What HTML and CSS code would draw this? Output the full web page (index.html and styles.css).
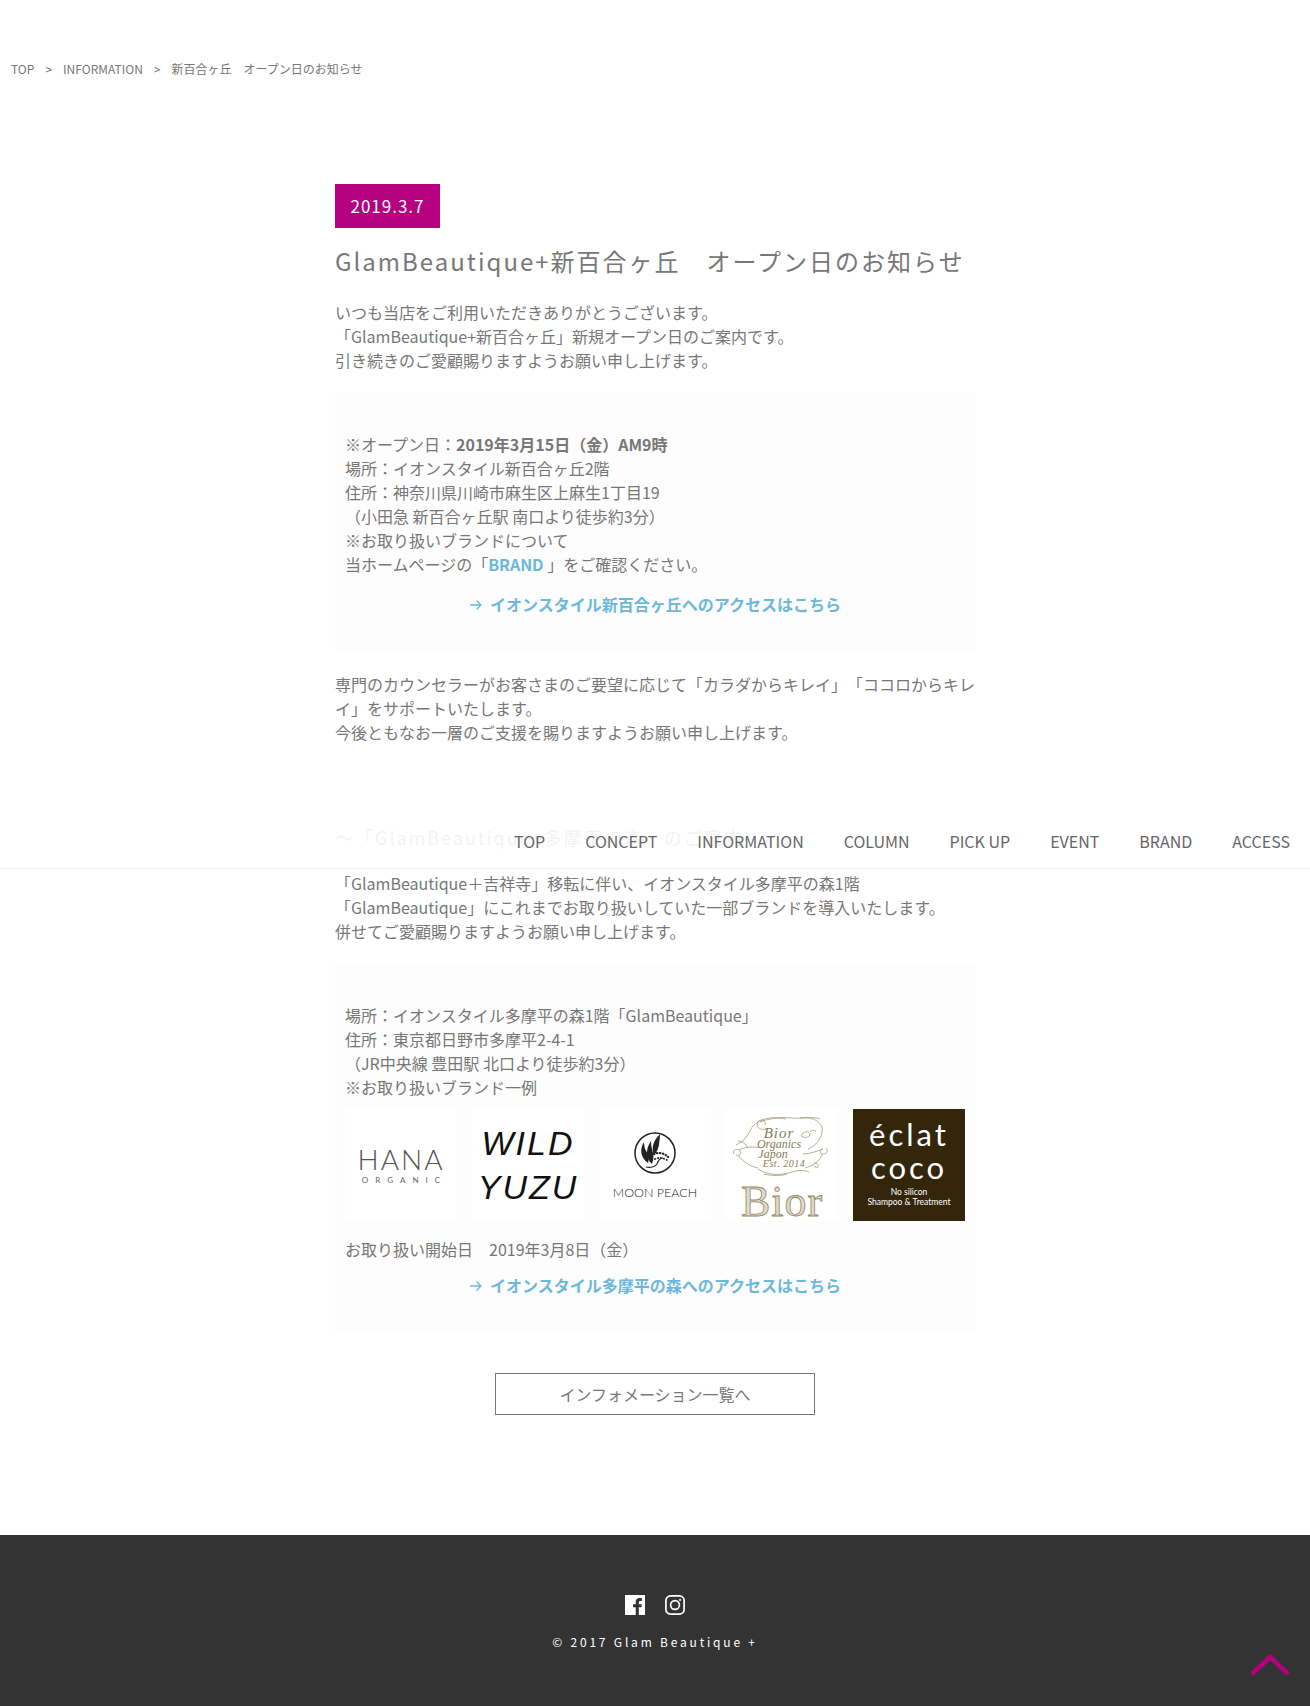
FILE: index.html
```html
<!DOCTYPE html>
<html lang="ja">
  <head>
    <meta charset="UTF-8" />
    <meta name="viewport" content="width=device-width, initial-scale=1.0" />
    <title>新百合ヶ丘 オープン日のお知らせ</title>
    <link rel="stylesheet" href="styles.css">
  </head>
  <body>
    <nav class="gnav">
      <a href="#">TOP</a>
      <a href="#">CONCEPT</a>
      <a href="#">INFORMATION</a>
      <a href="#">COLUMN</a>
      <a href="#">PICK UP</a>
      <a href="#">EVENT</a>
      <a href="#">BRAND</a>
      <a href="#">ACCESS</a>
    </nav>

    <div class="crumb">
      <a href="#">TOP</a><span>&gt;</span><a href="#">INFORMATION</a><span>&gt;</span><a href="#">新百合ヶ丘　オープン日のお知らせ</a>
    </div>

    <main class="article">
      <div class="date">2019.3.7</div>
      <h1 class="title">GlamBeautique+新百合ヶ丘　オープン日のお知らせ</h1>
      <p class="para">
        いつも当店をご利用いただきありがとうございます。<br />
        「GlamBeautique+新百合ヶ丘」新規オープン日のご案内です。<br />
        引き続きのご愛顧賜りますようお願い申し上げます。
      </p>

      <div class="infobox">
        ※オープン日：<b>2019年3月15日（金）AM9時</b><br />
        場所：イオンスタイル新百合ヶ丘2階<br />
        住所：神奈川県川崎市麻生区上麻生1丁目19<br />
        （小田急 新百合ヶ丘駅 南口より徒歩約3分）<br />
        ※お取り扱いブランドについて<br />
        当ホームページの「<a class="brandlink" href="#">BRAND</a> 」をご確認ください。
        <a class="access first" href="#">
          <svg class="arrow" viewBox="0 0 14 12"><path d="M1 6h11M7.5 1.5 12 6l-4.5 4.5" /></svg>イオンスタイル新百合ヶ丘へのアクセスはこちら
        </a>
      </div>

      <p class="para">
        専門のカウンセラーがお客さまのご要望に応じて「カラダからキレイ」「ココロからキレイ」をサポートいたします。<br />
        今後ともなお一層のご支援を賜りますようお願い申し上げます。
      </p>

      <h2 class="subtitle">〜「GlamBeautique+多摩平の森」のご案内</h2>
      <p class="para tight">
        「GlamBeautique＋吉祥寺」移転に伴い、イオンスタイル多摩平の森1階<br />
        「GlamBeautique」にこれまでお取り扱いしていた一部ブランドを導入いたします。<br />
        併せてご愛顧賜りますようお願い申し上げます。
      </p>

      <div class="infobox second">
        場所：イオンスタイル多摩平の森1階「GlamBeautique」<br />
        住所：東京都日野市多摩平2-4-1<br />
        （JR中央線 豊田駅 北口より徒歩約3分）<br />
        ※お取り扱いブランド一例
        <div class="logos">
          <div class="logo hana">
            <span class="hana-name">HANA</span>
            <span class="hana-sub">ORGANIC</span>
          </div>
          <div class="logo yuzu">
            <span>WILD</span>
            <span>YUZU</span>
          </div>
          <div class="logo moon">
            <svg class="moon-mark" viewBox="0 0 44 44">
              <circle cx="22" cy="22" r="20" fill="none" stroke="#222" stroke-width="1.5" />
              <path fill="#222" d="M15 32C8 27 6 19 11 11c0 6 2 9 4 12 1 3 1 6 0 9z" />
              <path fill="#222" d="M19 33c-6-6-7-14-1-23 0 5 1 8 2 12 1 4 0 8-1 11z" />
              <path fill="#222" d="M21 24c-3-7-1-14 6-21 0 5-1 8-1 11-1 4-2 7-5 10z" />
              <path fill="none" stroke="#222" stroke-width="1.2" d="M13 36c4 1 9 0 11-3 1-3 3-6 6-6" />
              <path fill="none" stroke="#222" stroke-width="2.2" stroke-linecap="round" stroke-dasharray=".4 2.6" d="M21 23c5-2 11-1 15 4" />
              <path fill="none" stroke="#222" stroke-width="1.8" stroke-linecap="round" stroke-dasharray=".4 2.6" d="M22 28c4-2 8-1 12 1" />
            </svg>
            <span class="moon-name">MOON PEACH</span>
          </div>
          <div class="logo bior">
            <svg class="bior-mark" viewBox="0 0 112 68">
              <path fill="none" stroke="#a39a7a" stroke-width=".8" d="M40 18c-6 2-11-3-8-7 3-4 9-1 7 3M34 11c10-4 22-5 32-4 12 1 22-2 28 1M74 7c12-2 24 4 22 14-1 8-7 14-14 17M60 8C42 4 28 10 24 20c-3 6-6 10-14 14" />
              <path fill="none" stroke="#a39a7a" stroke-width=".8" d="M8 43c-2-3 2-6 5-4 4 2 0 8-3 5M13 39c6-3 15-4 23-2M13 45c4 6 11 10 19 12M12 30c4 0 8 3 10 7" />
              <path fill="none" stroke="#a39a7a" stroke-width=".8" d="M100 37c3 3 0 7-4 6-3-1-2-5 1-5M97 38c-6 2-13 5-20 5M96 44c-3 7-10 11-17 13M88 52c3 0 5 2 4 4-1 1-3 1-3-1" />
              <path fill="none" stroke="#a39a7a" stroke-width=".8" d="M32 58c9 6 22 7 34 3 6-2 13-2 17 0M38 63c8 2 17 2 23 0" />
              <path fill="none" stroke="#a39a7a" stroke-width=".8" d="M76 23c3-3 7-3 8 0 0 3-4 4-7 3-2 0-2-2-1-3zM84 21c2-2 4-2 6-1" />
              <text x="53" y="27" class="bior-t1">Bior</text>
              <text x="53" y="37" class="bior-t2">Organics</text>
              <text x="47" y="47" class="bior-t2">Japon</text>
              <text x="58" y="56" class="bior-t3">Est. 2014</text>
            </svg>
            <span class="bior-name">Bior</span>
          </div>
          <div class="logo eclat">
            <span class="eclat-name">éclat</span>
            <span class="eclat-name">coco</span>
            <span class="eclat-sub">No silicon<br />Shampoo &amp; Treatment</span>
          </div>
        </div>
        <div class="startdate">お取り扱い開始日　2019年3月8日（金）</div>
        <a class="access" href="#">
          <svg class="arrow" viewBox="0 0 14 12"><path d="M1 6h11M7.5 1.5 12 6l-4.5 4.5" /></svg>イオンスタイル多摩平の森へのアクセスはこちら
        </a>
      </div>

      <a class="listbtn" href="#">インフォメーション一覧へ</a>
    </main>

    <footer class="footer">
      <div class="sns">
        <a href="#">
          <svg viewBox="0 0 20 20"><path fill="#fff" fill-rule="evenodd" d="M0 0h20v20h-6.2v-7.7h2.6l.4-3h-3V7.4c0-.9.3-1.5 1.5-1.5h1.6V3.2c-.3 0-1.2-.1-2.3-.1-2.3 0-3.9 1.4-3.9 4v2.2H8v3h2.7V20H0z" /></svg>
        </a>
        <a href="#">
          <svg viewBox="0 0 20 20" fill="none" stroke="#fff" stroke-width="1.7">
            <rect x=".9" y=".9" width="18.2" height="18.2" rx="4.6" />
            <circle cx="10" cy="10" r="4.4" />
            <circle cx="15.1" cy="4.9" r=".7" fill="#fff" stroke-width=".8" />
          </svg>
        </a>
      </div>
      <div class="copy">© 2017 Glam Beautique +</div>
      <a class="pagetop" href="#">
        <svg viewBox="0 0 40 22"><path d="M2 20 20 3l18 17" /></svg>
      </a>
    </footer>
  </body>
</html>
```

FILE: styles.css
```css
body {
  margin: 0;
  position: relative;
  font-family: "Noto Sans CJK JP", "Noto Sans", sans-serif;
  font-size: 16px;
  line-height: 24px;
  color: #777;
  background-color: #fff;
  text-spacing-trim: space-all;
}

a {
  color: inherit;
  text-decoration: none;
}

/* nav sits over the article */
.gnav {
  position: absolute;
  top: 789px;
  left: 0;
  right: 0;
  height: 80px;
  box-sizing: border-box;
  display: flex;
  justify-content: flex-end;
  align-items: flex-end;
  gap: 40px;
  padding: 0 20px 15px 0;
  background-color: rgba(255, 255, 255, 0.9);
  border-bottom: 1px solid #f0f0f0;
  color: #666;
}

.crumb {
  padding: 57px 0 0 11px;
  font-size: 12px;
  color: #777;
}

.crumb span {
  margin: 0 11px;
}

.article {
  width: 640px;
  margin: 103px auto 0;
}

.date {
  width: 105px;
  height: 44px;
  font-size: 17px;
  line-height: 44px;
  text-align: center;
  letter-spacing: 1px;
  color: #fff;
  background-color: #b5007f;
}

.title {
  margin: 15px 0 0;
  padding-bottom: 1px;
  font-size: 24px;
  font-weight: 400;
  line-height: 36px;
  letter-spacing: 2px;
}

.para {
  margin: 20px 0 0;
}

.infobox {
  margin-top: 20px;
  padding: 40px 0 36px 10px;
  background-color: #fdfdfd;
}

.brandlink,
.access {
  color: #6cb8da;
  font-weight: 700;
}

.access {
  display: block;
  margin-top: 12px;
  padding-right: 10px;
  text-align: center;
}

.access.first {
  margin-top: 16px;
}

.arrow {
  width: 14px;
  height: 12px;
  margin-right: 7px;
  fill: none;
  stroke: #6cb8da;
  stroke-width: 1.3;
}

.subtitle {
  margin: 75px 0 0;
  font-size: 18px;
  font-weight: 400;
  line-height: 36px;
  letter-spacing: 2px;
}

.tight {
  margin-top: 16px;
}

.logos {
  display: flex;
  gap: 15px;
  margin-top: 10px;
}

.logo {
  width: 112px;
  height: 112px;
  flex-shrink: 0;
  display: flex;
  flex-direction: column;
  align-items: center;
  justify-content: flex-start;
  background-color: #fff;
  color: #222;
}

.hana {
  justify-content: center;
}

.hana-name {
  font-family: Lato, sans-serif;
  font-size: 28px;
  font-weight: 300;
  line-height: 30px;
  letter-spacing: 2px;
  color: #555;
}

.hana-sub {
  font-family: Lato, sans-serif;
  font-size: 8px;
  line-height: 12px;
  letter-spacing: 7px;
  margin-right: -7px;
  color: #666;
}

.yuzu {
  justify-content: center;
  font-family: "Liberation Sans", sans-serif;
  font-size: 34px;
  font-style: italic;
  line-height: 44px;
  letter-spacing: 2px;
  color: #111;
}

.moon {
  padding-top: 22px;
  box-sizing: border-box;
}

.moon-mark {
  width: 44px;
  height: 44px;
  flex-shrink: 0;
}

.moon-name {
  font-family: Lato, sans-serif;
  font-size: 12.5px;
  font-weight: 300;
  line-height: 16px;
  margin-top: 10px;
  white-space: nowrap;
}

.bior-mark {
  display: block;
  width: 112px;
  height: 68px;
  margin-top: 2px;
  flex-shrink: 0;
}

.bior-mark text {
  font-family: "Liberation Serif", serif;
  font-style: italic;
  fill: #857c58;
  text-anchor: middle;
}

.bior-t1 {
  font-size: 15px;
  letter-spacing: 1px;
}

.bior-t2 {
  font-size: 12px;
}

.bior-t3 {
  font-size: 10px;
  letter-spacing: .5px;
}

.bior-name {
  margin-top: 7px;
  font-family: "Liberation Serif", serif;
  font-size: 44px;
  line-height: 32px;
  letter-spacing: 1px;
  color: #e0dccb;
  -webkit-text-stroke: .8px #8f8663;
}

.eclat {
  box-sizing: border-box;
  padding-top: 9px;
  background-color: #33260a;
  color: #fff;
}

.eclat-name {
  font-family: Lato, sans-serif;
  font-size: 31px;
  line-height: 33px;
  letter-spacing: 3px;
}

.eclat-sub {
  margin-top: 4px;
  font-family: Lato, sans-serif;
  font-size: 8.5px;
  line-height: 9.5px;
  text-align: center;
  white-space: nowrap;
}

.startdate {
  margin-top: 16px;
}

.listbtn {
  display: block;
  width: 320px;
  height: 42px;
  box-sizing: border-box;
  margin: 40px auto 0;
  line-height: 41px;
  text-align: center;
  border: 1px solid #777;
}

.footer {
  position: relative;
  margin-top: 120px;
  padding: 60px 0 54px;
  background-color: #333;
  color: #fff;
}

.sns {
  display: flex;
  justify-content: center;
  gap: 20px;
}

.sns a,
.sns svg {
  display: block;
  width: 20px;
  height: 20px;
}

.copy {
  margin-top: 17px;
  font-size: 12px;
  line-height: 20px;
  letter-spacing: 2.8px;
  text-align: center;
}

.pagetop {
  position: absolute;
  right: 20px;
  bottom: 30px;
  width: 40px;
  height: 22px;
}

.pagetop svg {
  display: block;
  fill: none;
  stroke: #b5007f;
  stroke-width: 4.5;
}
```
